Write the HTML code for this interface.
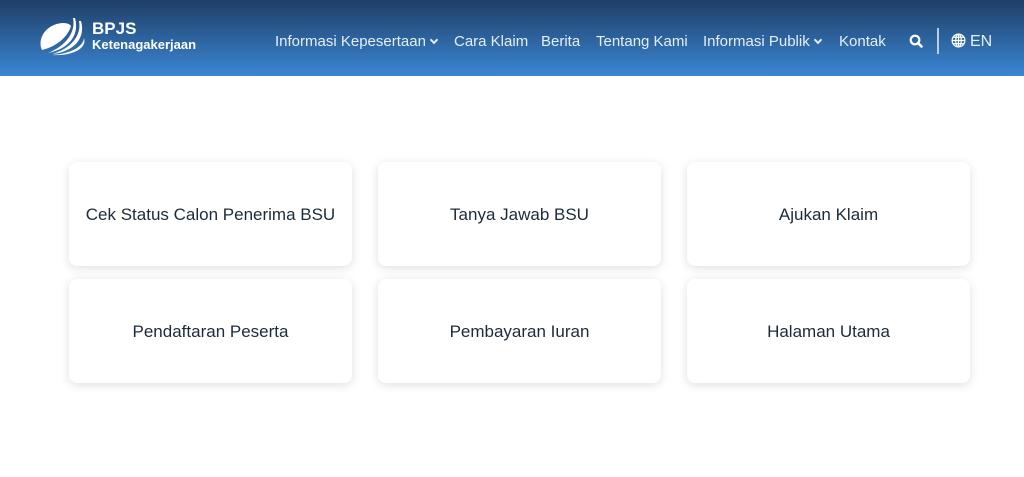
<!DOCTYPE html>
<html><head><meta charset="utf-8"><style>
*{margin:0;padding:0;box-sizing:border-box}
body{width:1024px;height:477px;background:#fff;font-family:"Liberation Sans",sans-serif;overflow:hidden;position:relative}
.hdr{position:absolute;left:0;top:0;width:1024px;height:76px;background:linear-gradient(#1f3f66,#3a86d4)}
.logo{position:absolute;left:38px;top:16px}
.bt{position:absolute;left:92px;top:21px;color:#fff;font-weight:bold;font-size:17px;line-height:16px}
.bt2{position:absolute;left:92px;top:38px;color:#fff;font-weight:bold;font-size:13px;line-height:14px}
.nav{position:absolute;top:33px;color:#e6eef8;font-size:15px;white-space:nowrap}
.card{position:absolute;width:283px;height:104px;background:#fff;border-radius:8px;box-shadow:0 2px 10px rgba(0,0,0,.13);display:flex;align-items:center;justify-content:center;font-size:17px;color:#1c2b3a;padding-top:2px}
.chev{display:inline-block;width:6px;height:6px;border-right:2px solid #e6eef8;border-bottom:2px solid #e6eef8;transform:rotate(45deg);margin-left:5px;position:relative;top:-3px}
</style></head><body>
<div class="hdr">
<svg class="logo" width="50" height="40" viewBox="0 0 50 40">
<path d="M4 34 C0 26 4 14 16 9 C26 5 32 8 33 10 C30 20 20 30 4 34Z" fill="#fff"/>
<path d="M35 2 C38 16 28 30 10 37 C30 33 42 20 37 2Z" fill="#fff"/>
<path d="M41 5 C44 20 32 33 14 38 C36 36 48 22 43 5Z" fill="#fff"/>
<path d="M14 39 C30 38 45 32 46 22 C49 32 36 40 14 39Z" fill="#fff"/>
</svg>
<div class="bt">BPJS</div><div class="bt2">Ketenagakerjaan</div>
<div class="nav" style="left:275px">Informasi Kepesertaan<span class="chev"></span></div>
<div class="nav" style="left:454px">Cara Klaim</div>
<div class="nav" style="left:541px">Berita</div>
<div class="nav" style="left:596px">Tentang Kami</div>
<div class="nav" style="left:703px">Informasi Publik<span class="chev"></span></div>
<div class="nav" style="left:839px">Kontak</div>
<svg style="position:absolute;left:909px;top:34px" width="14" height="14" viewBox="0 0 14 14"><circle cx="6" cy="6" r="4.3" fill="none" stroke="#fff" stroke-width="2.2"/><path d="M9 9 L12.5 12.5" stroke="#fff" stroke-width="2.6" stroke-linecap="round"/></svg>
<div style="position:absolute;left:937px;top:28px;width:2px;height:26px;background:#b9cde6"></div>
<svg style="position:absolute;left:951px;top:33px" width="15" height="15" viewBox="0 0 16 16" fill="none" stroke="#fff" stroke-width="1.3"><circle cx="8" cy="8" r="6.8"/><ellipse cx="8" cy="8" rx="3" ry="6.8"/><path d="M1.2 8H14.8M2.5 4.5H13.5M2.5 11.5H13.5M8 1.2V14.8"/></svg>
<div class="nav" style="left:970px;font-size:16px">EN</div>
</div>
<div class="card" style="left:69px;top:162px">Cek Status Calon Penerima BSU</div>
<div class="card" style="left:378px;top:162px">Tanya Jawab BSU</div>
<div class="card" style="left:687px;top:162px">Ajukan Klaim</div>
<div class="card" style="left:69px;top:279px">Pendaftaran Peserta</div>
<div class="card" style="left:378px;top:279px">Pembayaran Iuran</div>
<div class="card" style="left:687px;top:279px">Halaman Utama</div>
</body></html>
